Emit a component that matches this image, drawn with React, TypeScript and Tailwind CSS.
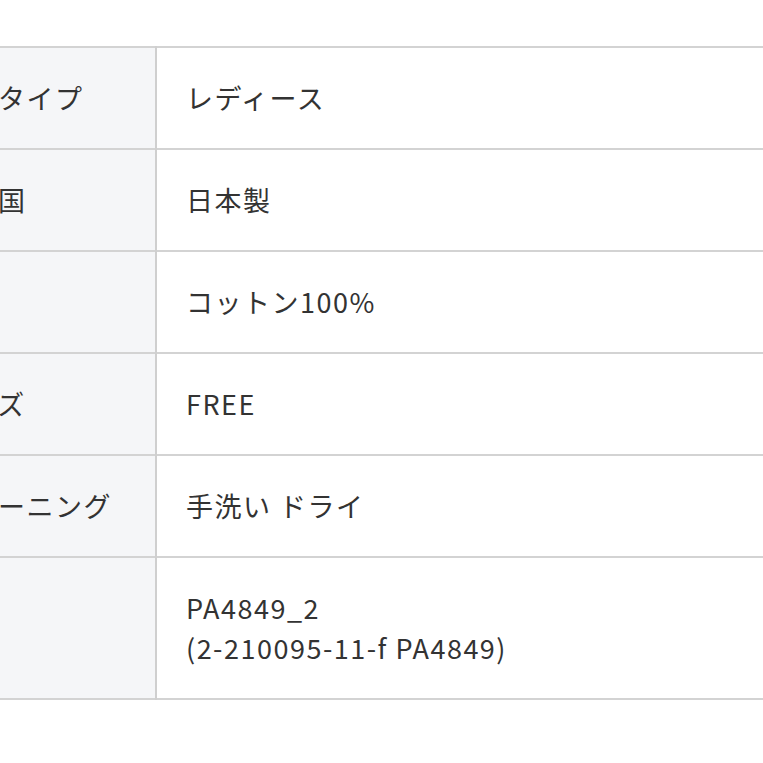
const rows: { label: string; value: string[] }[] = [
  { label: "商品タイプ", value: ["レディース"] },
  { label: "原産国", value: ["日本製"] },
  { label: "素材", value: ["コットン100%"] },
  { label: "サイズ", value: ["FREE"] },
  { label: "クリーニング", value: ["手洗い ドライ"] },
  { label: "品番", value: ["PA4849_2", "(2-210095-11-f PA4849)"] },
];

export default function App() {
  return (
    <div
      className="w-[763px] h-[763px] overflow-hidden bg-white pt-[46px] text-[#333333]"
      style={{ fontFamily: '"Noto Sans CJK JP", "Noto Sans", sans-serif' }}
    >
      <table className="ml-[-110px] w-[920px] border-collapse text-[27px] leading-[40px] tracking-[1.5px]">
        <tbody>
          {rows.map((r) => (
            <tr key={r.label} className="border-y-2 border-[#d3d3d3]">
              <th className="w-[266px] bg-[#f5f6f8] border-r-[2px] border-[#cfcfcf] py-[30px] pl-[51px] text-left font-normal tracking-[1.5px] align-middle">
                {r.label}
              </th>
              <td className="py-[30px] pl-[29px] align-middle">
                {r.value.map((v) => (
                  <div key={v}>{v}</div>
                ))}
              </td>
            </tr>
          ))}
        </tbody>
      </table>
    </div>
  );
}
